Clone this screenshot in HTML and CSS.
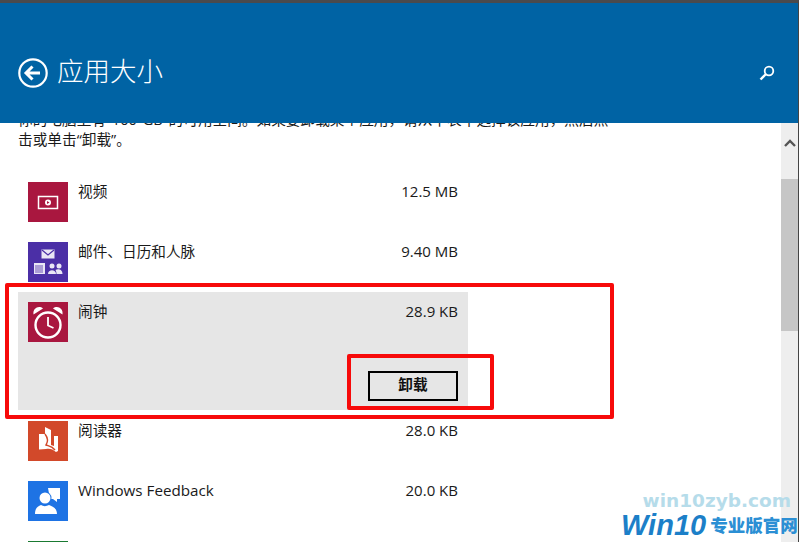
FILE: index.html
```html
<!DOCTYPE html>
<html lang="zh-CN">
<head>
<meta charset="utf-8">
<title>应用大小</title>
<link rel="stylesheet" href="styles.css">
</head>
<body>
<div class="screen">
  <header class="header">
    <div class="title-group">
      <svg class="back" viewBox="0 0 30 30"><circle cx="15" cy="15" r="13.700" fill="none" stroke="#fff" stroke-width="2.200"/><path d="M8 15h14M14.500 8.500 8 15l6.500 6.500" fill="none" stroke="#fff" stroke-width="3"/></svg>
      <h1 class="title">应用大小</h1>
    </div>
    <svg class="search" viewBox="0 0 16 16"><circle cx="10" cy="6" r="4.300" fill="none" stroke="#fff" stroke-width="1.800"/><path d="M7 9 1.500 14.500" stroke="#fff" stroke-width="2.400" fill="none"/></svg>
  </header>
  <div class="body">
    <main class="content">
      <p class="intro">你的电脑上有 100 GB 的可用空间。如果要卸载某个应用，请从下表中选择该应用，然后点击或单击“卸载”。</p>
      <ul class="list">
        <li class="row">
          <span class="tile tile-video"><svg viewBox="0 0 40 40"><rect x="10.500" y="14.500" width="19" height="12" fill="none" stroke="#fff" stroke-width="1.500"/><circle cx="20" cy="20.500" r="3" fill="#fff"/><path d="M19 19l2.500 1.500L19 22z" fill="#a9173f"/></svg></span>
          <span class="name">视频</span><span class="size">12.5 MB</span>
        </li>
        <li class="row">
          <span class="tile tile-mail"><svg viewBox="0 0 40 40"><rect x="13.500" y="7.500" width="13" height="9" fill="#e9e6f5"/><path d="M14 8l6 5 6-5" fill="none" stroke="#4b2fa6" stroke-width="1.200"/><rect x="6" y="21" width="11" height="11" fill="#e9e6f5"/><path d="M8 23v8M10 23v8M12 23v8M14 23v8" stroke="#4b2fa6" stroke-width=".8"/><circle cx="24" cy="24" r="2.500" fill="#e9e6f5"/><circle cx="31" cy="24" r="2.500" fill="#e9e6f5"/><path d="M20 32c0-5 8-5 8 0zM28.500 32c0-2-.5-3-1-4 2-1.500 7-1 7 4z" fill="#e9e6f5"/></svg></span>
          <span class="name">邮件、日历和人脉</span><span class="size">9.40 MB</span>
        </li>
        <li class="row row-selected">
          <div class="row-top">
            <span class="tile tile-video"><svg viewBox="0 0 40 40"><circle cx="20" cy="23" r="12.500" fill="none" stroke="#fff" stroke-width="2.400"/><path d="M20 15V23.500L25.500 26" fill="none" stroke="#fff" stroke-width="1.800"/><path d="M5.500 12.500C4.500 6 11 3 15 6.500zM34.500 12.500C35.500 6 29 3 25 6.500z" fill="#fff"/></svg></span>
            <span class="name">闹钟</span><span class="size">28.9 KB</span>
          </div>
          <button class="uninstall">卸载</button>
        </li>
        <li class="row">
          <span class="tile tile-reader"><svg viewBox="0 0 40 40"><path d="M11 13h6V6l6 3v15l3 1V15h4v15l-2 1c-3-3-7-4-10-3l-7 .500z" fill="#fff"/><path d="M17 13c3 4 3 8 1 11 2 1 6 1 9 5" fill="none" stroke="#d2492a" stroke-width="1.400"/></svg></span>
          <span class="name">阅读器</span><span class="size">28.0 KB</span>
        </li>
        <li class="row">
          <span class="tile tile-feedback"><svg viewBox="0 0 40 40"><path d="M20 7h12v11h-3v3l-4-3h-3z" fill="#fff"/><circle cx="17" cy="17" r="6.500" fill="#1e73e4"/><circle cx="17" cy="17" r="5.500" fill="#fff"/><path d="M7 33c0-6 3-8 6-9 2 1.500 5.500 1.500 8 0 3 1 8 3 8 9z" fill="#fff"/></svg></span>
          <span class="name latin">Windows Feedback</span><span class="size">20.0 KB</span>
        </li>
        <li class="row">
          <span class="tile tile-green"></span>
        </li>
      </ul>
    </main>
    <aside class="scrollbar">
      <div class="scroll-btn"><svg class="chevron" viewBox="0 0 12 8"><path d="M1 7l5-5 5 5" fill="none" stroke="#555" stroke-width="2.400"/></svg></div>
      <div class="scroll-thumb"></div>
      <div class="scroll-track"></div>
    </aside>
  </div>
  <div class="mark mark-large"></div>
  <div class="mark mark-small"></div>
  <div class="watermark">
    <div class="wm-url">win10zyb.com</div>
    <div class="wm-logo"><span class="wm-win">Win10</span><span class="wm-cn">专业版官网</span></div>
  </div>
</div>
</body>
</html>
```
FILE: styles.css
```css
* { box-sizing: border-box; }
html, body { margin: 0; height: 100%; }
body {
  background: #fff;
  color: #1a1a1a;
  font-family: "Open Sans", "Noto Sans CJK SC", sans-serif;
  overflow: hidden;
}
.screen {
  position: relative;
  width: 799px;
  height: 542px;
  display: flex;
  flex-direction: column;
  overflow: hidden;
  border-top: 3px solid #4a4a4c;
  border-right: 1px solid #444;
}
.header {
  flex: 0 0 120px;
  background: #0063a4;
  display: flex;
  justify-content: space-between;
  align-items: flex-start;
  padding: 55px 23px 0 18px;
  position: relative;
  z-index: 1;
}
.title-group { display: flex; align-items: flex-start; gap: 9px; }
.back { width: 30px; height: 30px; }
.title {
  margin: -3px 0 0;
  color: #fff;
  font: 300 26.500px/30px "Noto Sans CJK SC", sans-serif;
}
.search { width: 16px; height: 16px; margin-top: 7px; }
.body { flex: 1; display: flex; min-height: 0; }
.content { flex: 1; min-width: 0; padding-left: 18px; overflow: hidden; }
.intro {
  width: 592px;
  margin: -14px 0 0;
  font-size: 14.670px;
  line-height: 20px;
  word-spacing: 2px;
  font-family: "Open Sans", "Noto Sans CJK SC", sans-serif;
}
.list { list-style: none; margin: 33px 0 0; padding: 0; width: 450px; }
.row {
  position: relative;
  height: 60px;
  display: flex;
  padding-left: 10px;
  padding-right: 10px;
}
.row-selected {
  display: block;
  height: 118px;
  margin: -10px 0 11px;
  padding-top: 10px;
  background: #e6e6e6;
}
.row-top { display: flex; }
.tile { flex: 0 0 40px; width: 40px; height: 40px; display: block; }
.tile svg { display: block; width: 40px; height: 40px; }
.tile-video { background: #a9173f; }
.tile-mail { background: #4b2fa6; }
.tile-reader { background: #d2492a; }
.tile-feedback { background: #1e73e4; }
.tile-green { background: #1a7a32; }
.name {
  flex: 1;
  margin-left: 10px;
  font-size: 14.670px;
  line-height: 19px;
}
.name.latin { font-size: 15.200px; }
.size { font-size: 15px; line-height: 19px; }
.uninstall {
  display: block;
  margin: 29px 0 0 auto;
  width: 90px;
  height: 30px;
  border: 2px solid #000;
  background: #e6e6e6;
  color: #111;
  font: 700 14.670px/20px "Noto Sans CJK SC", sans-serif;
  padding: 0 0 4px;
}
.scrollbar {
  flex: 0 0 17px;
  display: flex;
  flex-direction: column;
  background: #eeeeee;
}
.scroll-btn { height: 56px; display: flex; justify-content: center; padding-top: 16px; }
.chevron { width: 12px; height: 8px; }
.scroll-thumb { height: 152px; background: #c6c6c6; }
.scroll-track { flex: 1; }
.mark { position: absolute; border: 4px solid #f70a0a; border-radius: 2px; pointer-events: none; }
.mark-large { left: 5px; top: 280px; width: 609px; height: 136px; }
.mark-small { left: 347px; top: 351px; width: 147px; height: 56px; }
.watermark {
  position: absolute;
  left: 621px;
  top: 488px;
  width: 178px;
  text-align: right;
}
.wm-url {
  color: #b6dcea;
  font: 700 18.500px/20px "DejaVu Sans", sans-serif;
  padding-right: 8px;
}
.wm-logo { display: flex; align-items: center; white-space: nowrap; line-height: 28px; }
.wm-win {
  color: #1c7fc8;
  font: italic 700 29px/28px "Liberation Sans", sans-serif;
}
.wm-cn {
  color: #2b8fd4;
  font: 900 17.500px/28px "Noto Sans CJK SC", sans-serif;
  margin-left: 4px;
}
```
